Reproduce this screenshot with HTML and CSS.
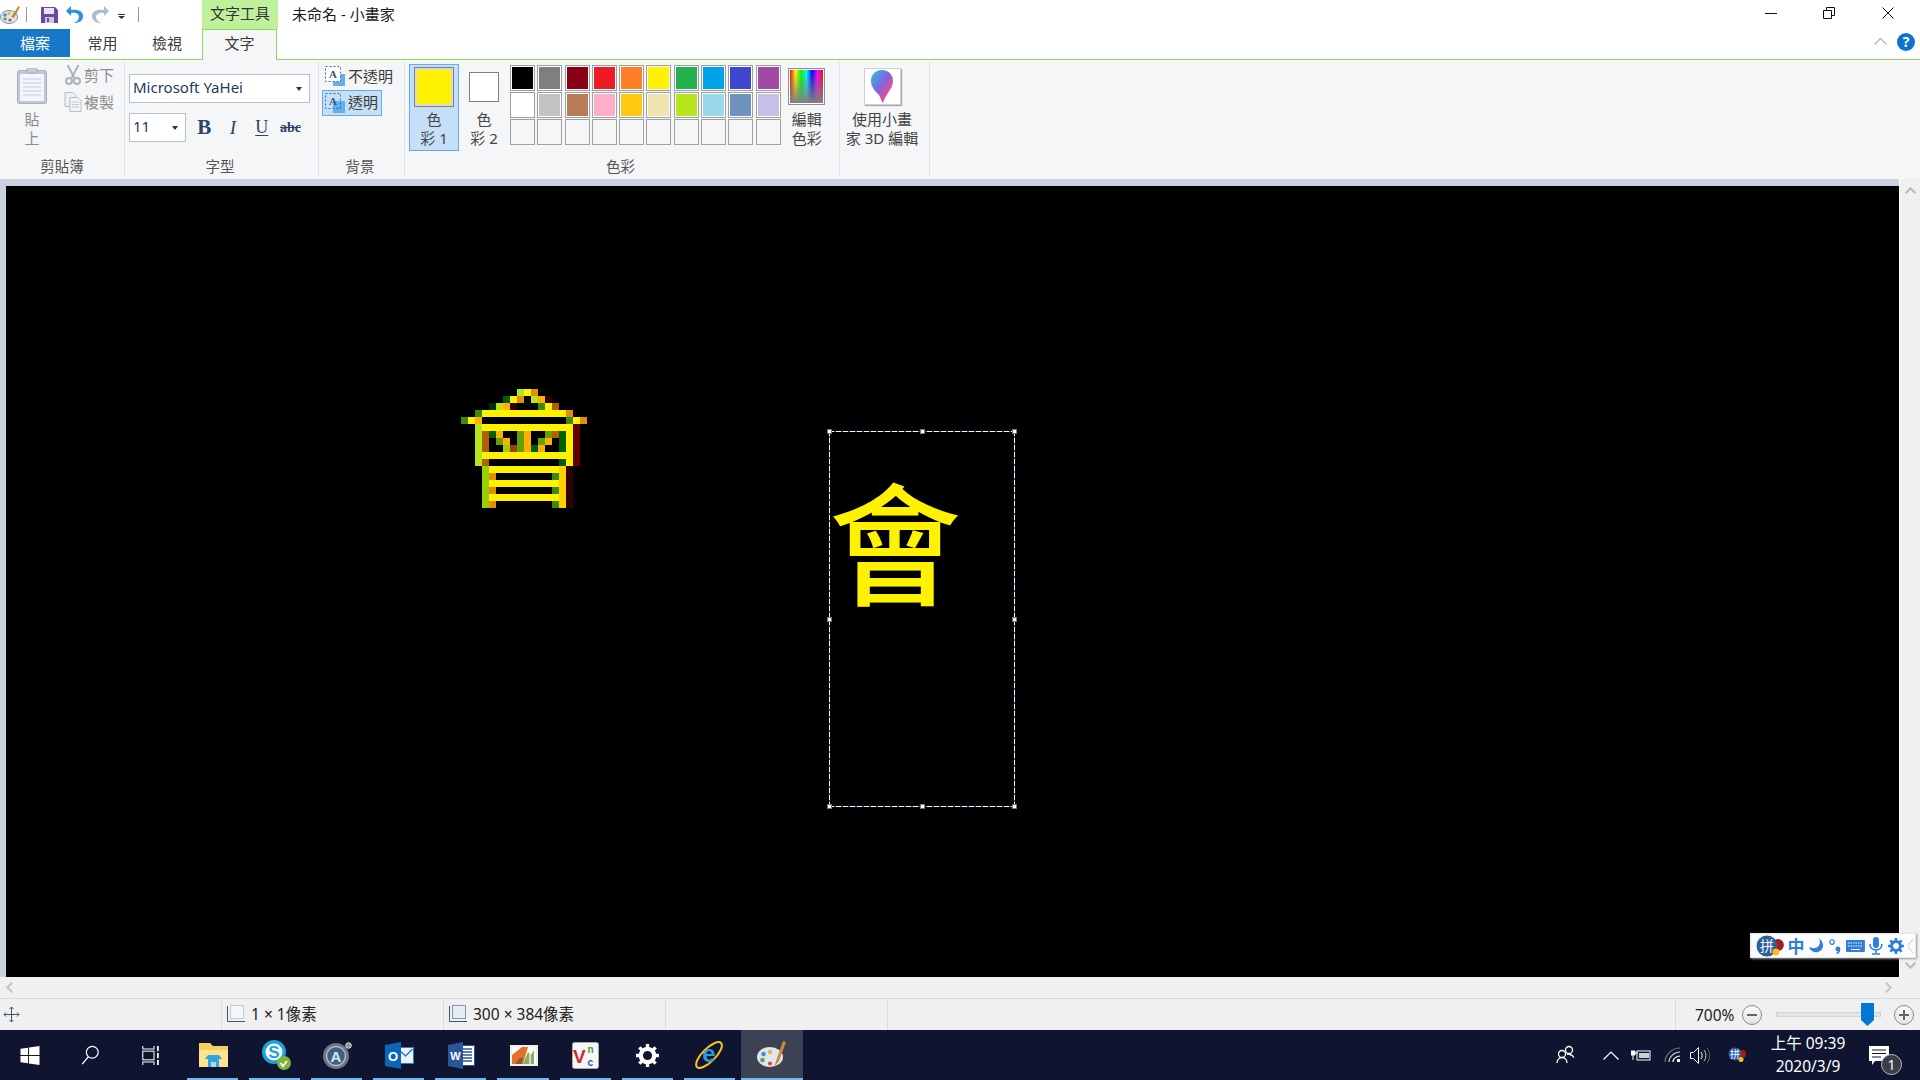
FILE: index.html
```html
<!DOCTYPE html>
<html lang="zh-Hant">
<head>
<meta charset="utf-8">
<title>未命名 - 小畫家</title>
<link rel="stylesheet" href="styles.css">
</head>
<body>
<div class="app">
  <header class="titlebar">
    <div class="qat">
      <svg class="qat-paint" width="21" height="21" viewBox="0 0 21 21"><ellipse cx="9" cy="13" rx="8.5" ry="6.5" fill="#dfe6ee" stroke="#7d8da3"/><circle cx="5" cy="11" r="1.7" fill="#3f8fd8"/><circle cx="9" cy="9.5" r="1.7" fill="#e9b93a"/><circle cx="5" cy="15" r="1.7" fill="#59a84b"/><circle cx="10" cy="16" r="1.6" fill="#d8483c"/><path d="M11 13 18.500 2l1.500 1-6 11z" fill="#c98a3b"/></svg>
      <span class="qat-sep"></span>
      <svg class="qat-save" width="17" height="16" viewBox="0 0 17 16"><path d="M0 0h14l3 3v13H0z" fill="#6a4aa3"/><rect x="3" y="1" width="10" height="6" fill="#e9e6f2"/><rect x="4" y="10" width="9" height="6" fill="#cfc8e0"/><rect x="6" y="11" width="2" height="4" fill="#6a4aa3"/></svg>
      <svg class="qat-undo" width="17" height="19" viewBox="0 0 17 19"><path d="M5 1 0 6l5 5V8c5-1 8 1 8 4 0 3-3 5-5 6 5 0 9-2 9-7 0-5-5-7-12-6z" fill="#2e8fdc"/></svg>
      <svg class="qat-redo" width="17" height="19" viewBox="0 0 17 19"><path d="M12 1l5 5-5 5V8C7 7 4 9 4 12c0 3 3 5 5 6-5 0-9-2-9-7 0-5 5-7 12-6z" fill="#a9bdd2"/></svg>
      <svg class="qat-drop" width="7" height="5" viewBox="0 0 7 5"><rect width="7" height="1" fill="#333"/><path d="M0 2h7L3.500 5z" fill="#333"/></svg>
      <span class="qat-sep qat-sep-end"></span>
    </div>
    <div class="context-title">文字工具</div>
    <div class="doc-title">未命名 - 小畫家</div>
    <div class="winctl">
      <span class="win-btn"><svg width="12" height="1" viewBox="0 0 12 1"><rect width="12" height="1" fill="#111"/></svg></span>
      <span class="win-btn"><svg width="12" height="12" viewBox="0 0 12 12"><path d="M.5 3.500h8v8h-8zM3.500 3.500v-3h8v8h-3" fill="none" stroke="#111"/></svg></span>
      <span class="win-btn"><svg width="12" height="12" viewBox="0 0 12 12"><path d="M.5.500l11 11M11.500.500l-11 11" fill="none" stroke="#111"/></svg></span>
    </div>
  </header>

  <nav class="tabs">
    <div class="tab tab-file">檔案</div>
    <div class="tab tab-home">常用</div>
    <div class="tab tab-view">檢視</div>
    <div class="tab tab-text">文字</div>
    <div class="tabs-right">
      <svg width="13" height="7" viewBox="0 0 13 7"><path d="M.5 6.500l6-6 6 6" fill="none" stroke="#b5b5b5" stroke-width="1.300"/></svg>
      <div class="help">?</div>
    </div>
  </nav>

  <section class="ribbon">
    <div class="group g-clip">
      <div class="group-body clip-body">
        <div class="paste">
          <svg width="30" height="36" viewBox="0 0 30 36"><rect x=".5" y="2.500" width="29" height="33" rx="2" fill="#bcc8d6" stroke="#a3b2c4"/><rect x="3" y="6" width="24" height="27" fill="#f3f5fa"/><path d="M6 11h18M6 15h18M6 19h18M6 23h18M6 27h18" stroke="#c4cbe0"/><rect x="10" y="0" width="10" height="5" rx="1.500" fill="#c5ced9" stroke="#a3b2c4"/></svg>
          <div class="stack-label muted">貼<br>上</div>
        </div>
        <div class="clip-actions">
          <div class="clip-row muted">
            <svg width="15" height="20" viewBox="0 0 15 20"><path d="M2 0l7 13M13 0L6 13" stroke="#aab4c2" stroke-width="2" fill="none"/><circle cx="3.500" cy="16" r="3" fill="none" stroke="#aab4c2" stroke-width="2"/><circle cx="11.500" cy="16" r="3" fill="none" stroke="#aab4c2" stroke-width="2"/></svg>
            <span>剪下</span>
          </div>
          <div class="clip-row muted">
            <svg width="17" height="20" viewBox="0 0 17 20"><path d="M.5.500h8l3 3v11H.5z" fill="#eef0f3" stroke="#b5bdc8"/><path d="M5.500 5.500h8l3 3v11h-11z" fill="#f3f4f7" stroke="#b5bdc8"/><path d="M7.500 10h7M7.500 12.500h7M7.500 15h7" stroke="#c3cad4"/></svg>
            <span>複製</span>
          </div>
        </div>
      </div>
      <div class="group-label">剪貼簿</div>
    </div>

    <div class="group g-font">
      <div class="group-body font-body">
        <div class="combo combo-font"><span>Microsoft YaHei</span><i class="caret"></i></div>
        <div class="font-row">
          <div class="combo combo-size"><span>11</span><i class="caret"></i></div>
          <div class="fmt fmt-b">B</div>
          <div class="fmt fmt-i">I</div>
          <div class="fmt fmt-u">U</div>
          <div class="fmt fmt-s">abc</div>
        </div>
      </div>
      <div class="group-label">字型</div>
    </div>

    <div class="group g-bg">
      <div class="group-body bg-body">
        <div class="bg-row">
          <svg width="20" height="20" viewBox="0 0 20 20"><rect x="8" y="8" width="12" height="12" fill="#63aef0"/><rect x=".5" y=".5" width="15" height="15" fill="#fff" stroke="#2f6fb5" stroke-dasharray="2 2"/><text x="8" y="12" class="ico-a">A</text></svg>
          <span>不透明</span>
        </div>
        <div class="bg-row bg-active">
          <svg width="20" height="20" viewBox="0 0 20 20"><rect x="8" y="8" width="12" height="12" fill="#63aef0"/><rect x=".5" y=".5" width="15" height="15" fill="none" stroke="#2f6fb5" stroke-dasharray="2 2"/><text x="8" y="12" class="ico-a">A</text></svg>
          <span>透明</span>
        </div>
      </div>
      <div class="group-label">背景</div>
    </div>

    <div class="group g-color">
      <div class="group-body color-body">
        <div class="color-btn color-active">
          <div class="swatch swatch-1"><i></i></div>
          <div class="stack-label">色<br>彩 1</div>
        </div>
        <div class="color-btn">
          <div class="swatch swatch-2"><i></i></div>
          <div class="stack-label">色<br>彩 2</div>
        </div>
        <div class="palette">
          <i class="cell c1"></i><i class="cell c2"></i><i class="cell c3"></i><i class="cell c4"></i><i class="cell c5"></i><i class="cell c6"></i><i class="cell c7"></i><i class="cell c8"></i><i class="cell c9"></i><i class="cell c10"></i>
          <i class="cell c11"></i><i class="cell c12"></i><i class="cell c13"></i><i class="cell c14"></i><i class="cell c15"></i><i class="cell c16"></i><i class="cell c17"></i><i class="cell c18"></i><i class="cell c19"></i><i class="cell c20"></i>
          <i class="cell"></i><i class="cell"></i><i class="cell"></i><i class="cell"></i><i class="cell"></i><i class="cell"></i><i class="cell"></i><i class="cell"></i><i class="cell"></i><i class="cell"></i>
        </div>
        <div class="edit-color">
          <div class="rainbow"><i></i></div>
          <div class="stack-label">編輯<br>色彩</div>
        </div>
      </div>
      <div class="group-label">色彩</div>
    </div>

    <div class="group g-3d">
      <div class="p3d">
        <div class="p3d-tile">
          <svg width="22" height="33" viewBox="0 0 22 33"><defs><linearGradient id="drop" x1="0" y1="0" x2="1" y2="1"><stop offset="0" stop-color="#27c8e8"/><stop offset=".45" stop-color="#7d66e0"/><stop offset=".75" stop-color="#ea4d8e"/><stop offset="1" stop-color="#f8a64a"/></linearGradient></defs><path d="M11 0c7 0 11 5 11 11 0 8-7 12-10 22-1-1-2-4-4-8C4 21 0 17 0 11 0 5 4 0 11 0z" fill="url(#drop)"/></svg>
        </div>
        <div class="stack-label">使用小畫<br>家 3D 編輯</div>
      </div>
    </div>
  </section>

  <main class="workspace">
    <div class="canvas">
      <svg class="pixel-art" width="126" height="119" viewBox="0 0 18 17" shape-rendering="crispEdges">
        <g fill="#fff200"><rect x="9" y="0" width="1" height="1"/><rect x="7" y="1" width="1" height="1"/><rect x="12" y="2" width="1" height="1"/><rect x="3" y="3" width="12" height="1"/><rect x="1" y="4" width="1" height="1"/><rect x="16" y="4" width="1" height="1"/><rect x="3" y="5" width="13" height="1"/><rect x="15" y="6" width="1" height="5"/><rect x="3" y="9" width="13" height="1"/><rect x="4" y="11" width="10" height="1"/><rect x="4" y="13" width="10" height="1"/><rect x="4" y="15" width="10" height="1"/></g>
        <g fill="#b5e61d"><rect x="8" y="0" width="1" height="1"/><rect x="10" y="1" width="1" height="1"/><rect x="5" y="2" width="1" height="1"/><rect x="2" y="5" width="1" height="6"/></g>
        <g fill="#99d000"><rect x="3" y="11" width="1" height="6"/><rect x="6" y="8" width="1" height="1"/></g>
        <g fill="#e09000"><rect x="10" y="0" width="1" height="1"/><rect x="8" y="1" width="1" height="1"/><rect x="15" y="3" width="1" height="1"/><rect x="17" y="4" width="1" height="1"/><rect x="4" y="12" width="1" height="1"/><rect x="4" y="14" width="1" height="1"/><rect x="4" y="16" width="1" height="1"/></g>
        <g fill="#ffb000"><rect x="11" y="1" width="1" height="1"/><rect x="6" y="2" width="1" height="1"/><rect x="2" y="4" width="1" height="1"/><rect x="5" y="6" width="1" height="1"/><rect x="6" y="7" width="1" height="1"/><rect x="12" y="7" width="1" height="1"/><rect x="11" y="8" width="1" height="1"/><rect x="9" y="6" width="1" height="3"/></g>
        <g fill="#ffd000"><rect x="14" y="11" width="1" height="6"/></g>
        <g fill="#006000"><rect x="6" y="1" width="1" height="1"/><rect x="14" y="6" width="1" height="3"/><rect x="14" y="10" width="1" height="1"/><rect x="4" y="6" width="1" height="1"/><rect x="10" y="8" width="1" height="1"/></g>
        <g fill="#003000"><rect x="4" y="2" width="1" height="1"/></g>
        <g fill="#3f8a00"><rect x="11" y="2" width="1" height="1"/><rect x="2" y="3" width="1" height="1"/><rect x="0" y="4" width="1" height="1"/><rect x="15" y="4" width="1" height="1"/><rect x="13" y="12" width="1" height="1"/><rect x="13" y="14" width="1" height="1"/><rect x="13" y="16" width="1" height="1"/></g>
        <g fill="#66a000"><rect x="8" y="6" width="1" height="3"/><rect x="12" y="6" width="1" height="1"/><rect x="5" y="7" width="1" height="1"/><rect x="11" y="7" width="1" height="1"/></g>
        <g fill="#b06000"><rect x="13" y="2" width="1" height="1"/><rect x="3" y="6" width="1" height="3"/><rect x="3" y="10" width="1" height="1"/><rect x="13" y="6" width="1" height="1"/></g>
        <g fill="#a04000"><rect x="7" y="8" width="1" height="1"/></g>
        <g fill="#600000"><rect x="16" y="5" width="1" height="6"/></g>
        <g fill="#300000"><rect x="12" y="1" width="1" height="1"/><rect x="7" y="2" width="1" height="1"/><rect x="15" y="11" width="1" height="6"/></g>
      </svg>
      <div class="textbox">
        <span class="textbox-glyph">會</span>
        <i class="h h-tl"></i><i class="h h-tc"></i><i class="h h-tr"></i><i class="h h-ml"></i><i class="h h-mr"></i><i class="h h-bl"></i><i class="h h-bc"></i><i class="h h-br"></i>
      </div>
    </div>
    <div class="vscroll">
      <svg width="11" height="7" viewBox="0 0 11 7"><path d="M.7 6.300l4.800-5 4.800 5" fill="none" stroke="#b9b9b9" stroke-width="2"/></svg>
      <svg width="11" height="7" viewBox="0 0 11 7"><path d="M.7.700l4.800 5 4.800-5" fill="none" stroke="#b9b9b9" stroke-width="2"/></svg>
    </div>
  </main>

  <div class="hscroll">
    <svg width="7" height="11" viewBox="0 0 7 11"><path d="M6.300.7l-5 4.800 5 4.800" fill="none" stroke="#c4c4c4" stroke-width="2"/></svg>
    <svg width="7" height="11" viewBox="0 0 7 11"><path d="M.7.7l5 4.800-5 4.800" fill="none" stroke="#c4c4c4" stroke-width="2"/></svg>
  </div>

  <footer class="status">
    <div class="st st-move"><svg width="17" height="17" viewBox="0 0 17 17"><path d="M8.500 1v15M1 8.500h15M6.500 3l2-2 2 2M6.500 14l2 2 2-2M3 6.500l-2 2 2 2M14 6.500l2 2-2 2" fill="none" stroke="#3d5670"/></svg></div>
    <div class="st st-cell"><svg width="19" height="18" viewBox="0 0 19 18"><rect x="3.500" y=".5" width="13" height="13" fill="#f6f6f6" stroke="#9aa3ad" stroke-dasharray="1 1"/><path d="M.5 1v15.500H18" fill="none" stroke="#3d5670"/></svg><span>1 × 1像素</span></div>
    <div class="st st-cell"><svg width="19" height="18" viewBox="0 0 19 18"><rect x="3.500" y=".5" width="13" height="13" fill="#e4edf5" stroke="#8797a8"/><path d="M.5 1v15.500H18" fill="none" stroke="#3d5670"/></svg><span>300 × 384像素</span></div>
    <div class="st st-empty"></div>
    <div class="st st-fill"></div>
    <div class="st st-zoom">
      <span class="zoom-val">700%</span>
      <span class="zoom-btn"><i class="zoom-minus"></i></span>
      <div class="zoom-track"><svg class="zoom-thumb" width="13" height="23" viewBox="0 0 13 23"><path d="M0 0h13v17l-6.500 6L0 17z" fill="#0078d7"/></svg></div>
      <span class="zoom-btn zoom-plus"><i class="zoom-minus"></i><i class="zoom-vert"></i></span>
    </div>
  </footer>

  <footer class="taskbar">
    <div class="tb-sys">
      <svg width="20" height="19" viewBox="0 0 20 20"><path d="M0 3l8-1.200v7.700H0zM9 1.700L20 0v9.500H9zM0 10.500h8v7.700L0 17zM9 10.500h11V20L9 18.300z" fill="#fff"/></svg>
    </div>
    <div class="tb-sys">
      <svg width="20" height="20" viewBox="0 0 20 22"><circle cx="12.500" cy="8" r="6.500" fill="none" stroke="#fff" stroke-width="1.300"/><path d="M8 13 1.500 21" stroke="#fff" stroke-width="1.500"/></svg>
    </div>
    <div class="tb-sys">
      <svg width="20" height="19" viewBox="0 0 20 22"><path d="M.5 0v3.500h13V0M.5 22v-3.500h13V22" fill="none" stroke="#fff" stroke-width="1.200"/><rect x=".5" y="6" width="13" height="10" fill="none" stroke="#fff" stroke-width="1.200"/><rect x="17" y="0" width="2" height="6" fill="#fff"/><rect x="17" y="8" width="2" height="6" fill="#fff"/><rect x="17" y="16" width="2" height="6" fill="#fff"/></svg>
    </div>
    <div class="tb-app tb-on">
      <svg width="29" height="24" viewBox="0 0 29 24"><path d="M0 0h11l3 3h15v21H0z" fill="#f6cf5c"/><path d="M0 7h29v17H0z" fill="#fbe48e"/><path d="M9 12h11l3 4h-3v8H9v-8H6z" fill="#35a4dd"/><rect x="12" y="19" width="5" height="5" fill="#a6dcf3"/></svg>
    </div>
    <div class="tb-app tb-on">
      <svg class="skype" width="30" height="30" viewBox="0 0 30 30"><circle cx="12" cy="12" r="12" fill="#19a3e0"/><circle cx="12" cy="12" r="8.500" fill="#fff"/><text x="12" y="18" class="ico-skype">S</text><circle cx="22" cy="23" r="7" fill="#7ab638"/><path d="M18.500 23l2.500 3 4-5" fill="none" stroke="#fff" stroke-width="1.800"/></svg>
    </div>
    <div class="tb-app tb-on">
      <svg width="29" height="27" viewBox="0 0 29 27"><circle cx="13" cy="14" r="13" fill="#6e7680"/><circle cx="13" cy="14" r="9.500" fill="#3c6085" stroke="#b0b8c0" stroke-width="1.500"/><text x="13" y="20" class="ico-a2">A</text><circle cx="25.500" cy="3.500" r="2.800" fill="#8d939a" stroke="#ddd"/></svg>
    </div>
    <div class="tb-app tb-on">
      <svg width="29" height="27" viewBox="0 0 29 27"><rect x="11.500" y="5.500" width="17" height="16" fill="#e9f2fb" stroke="#2e7cc8"/><path d="M13 7l7.500 7 7-7" fill="none" stroke="#2e7cc8" stroke-width="1.500"/><path d="M0 3 16 0v27L0 24z" fill="#0a66b8"/><text x="8" y="18.500" class="ico-o">O</text></svg>
    </div>
    <div class="tb-app tb-on">
      <svg width="27" height="27" viewBox="0 0 27 27"><rect x="10.500" y="3.500" width="16" height="20" fill="#fff" stroke="#2b579a"/><path d="M14 7h10M14 10h10M14 13h10M14 16h10M14 19h10" stroke="#2b579a" stroke-width="1.400"/><path d="M0 3 15 0v27L0 24z" fill="#2b579a"/><text x="7.500" y="18" class="ico-w">W</text></svg>
    </div>
    <div class="tb-app tb-on">
      <svg width="28" height="21" viewBox="0 0 28 21"><rect width="28" height="21" fill="#f4efe4"/><rect x="2" y="2" width="24" height="17" fill="#fff"/><path d="M2 19V10L12 2h6l-5 17z" fill="#e0722a"/><path d="M13 19l5-12 3 3 3-5v14z" fill="#8cae5a"/><path d="M6 19c1-5 4-7 7-6l-1 6z" fill="#8a5a3a"/><rect x="19" y="9" width="2" height="10" fill="#d8d8d8"/></svg>
    </div>
    <div class="tb-app tb-on">
      <svg width="27" height="27" viewBox="0 0 27 27"><rect x=".5" y=".5" width="26" height="26" rx="2" fill="#f7f7f7" stroke="#aaa"/><text x="1" y="21" class="ico-v">V</text><text x="15.500" y="11" class="ico-n">n</text><text x="15.500" y="24" class="ico-c">c</text></svg>
    </div>
    <div class="tb-app tb-on">
      <svg width="23" height="23" viewBox="0 0 24 24"><circle cx="12" cy="12" r="7" fill="none" stroke="#fff" stroke-width="4.500"/><path d="M12 0v5M12 19v5M0 12h5M19 12h5M3.500 3.500l3.500 3.500M17 17l3.500 3.500M20.500 3.500 17 7M7 17l-3.500 3.500" stroke="#fff" stroke-width="3.500"/></svg>
    </div>
    <div class="tb-app tb-on">
      <svg width="29" height="28" viewBox="0 0 29 28"><ellipse cx="14" cy="14" rx="17" ry="6.500" transform="rotate(-45 14 14)" fill="none" stroke="#f6c21c" stroke-width="2"/><text x="14" y="21" class="ico-e">e</text></svg>
    </div>
    <div class="tb-app tb-paint">
      <svg width="30" height="28" viewBox="0 0 30 28"><ellipse cx="13" cy="16" rx="13" ry="10" fill="#dfe6ee"/><circle cx="6.500" cy="13" r="2.300" fill="#3f8fd8"/><circle cx="13" cy="11" r="2.300" fill="#e9b93a"/><circle cx="5.500" cy="19" r="2.300" fill="#59a84b"/><circle cx="13" cy="22.500" r="2.100" fill="#d8483c"/><path d="M17 26 26 0l3 1-7 19z" fill="#c98a3b"/></svg>
    </div>
    <div class="tray">
      <div class="tr tr-people"><svg width="20" height="20" viewBox="0 0 20 20"><circle cx="13" cy="5" r="3.500" fill="none" stroke="#fff" stroke-width="1.300"/><circle cx="6" cy="9" r="3.500" fill="none" stroke="#fff" stroke-width="1.300"/><path d="M1 18c0-3 2-5.500 5-5.500s5 2.500 5 5.500M11 9.500c1-.5 5-.5 7 3" fill="none" stroke="#fff" stroke-width="1.300"/></svg></div>
      <div class="tr tr-chev"><svg width="16" height="9" viewBox="0 0 16 9"><path d="M.5 8.500 8 1l7.500 7.500" fill="none" stroke="#fff" stroke-width="1.200"/></svg></div>
      <div class="tr tr-power"><svg width="20" height="14" viewBox="0 0 20 14"><rect x="6" y="3" width="13" height="9" fill="none" stroke="#fff"/><rect x="8" y="5" width="10" height="5" fill="#cfcfcf"/><path d="M0 3h4v4H0zM4 5h3M2 7v5" stroke="#fff" fill="#fff"/></svg></div>
      <div class="tr tr-wifi"><svg width="17" height="16" viewBox="0 0 17 16"><path d="M1 15C1 8 8 1 16 1" fill="none" stroke="#777" stroke-width="1.200"/><path d="M5 15c0-5 5-10 11-10" fill="none" stroke="#ccc" stroke-width="1.200"/><path d="M9 15c0-3 3-6 7-6" fill="none" stroke="#fff" stroke-width="1.200"/><rect x="13" y="12" width="3" height="3" fill="#fff"/></svg></div>
      <div class="tr tr-vol"><svg width="20" height="17" viewBox="0 0 20 17"><path d="M.5 5.500h3l5-5v16l-5-5h-3z" fill="none" stroke="#fff"/><path d="M11 5c1.500 2 1.500 5 0 7" fill="none" stroke="#fff"/><path d="M14 3c2.500 3 2.500 8 0 11" fill="none" stroke="#ccc"/><path d="M17 1c3.500 4.500 3.500 10.500 0 15" fill="none" stroke="#666"/></svg></div>
      <div class="tr tr-ime"><svg width="18" height="16" viewBox="0 0 18 16"><circle cx="14" cy="7" r="4" fill="#b01818"/><circle cx="7" cy="7" r="6.500" fill="#2a5fa0"/><text x="7" y="11" class="ico-ime">拼</text><circle cx="13" cy="12.500" r="2.500" fill="#f4c21a"/></svg></div>
      <div class="tr tr-clock">上午 09:39<br>2020/3/9</div>
      <div class="tr tr-action">
        <svg width="20" height="19" viewBox="0 0 20 19"><path d="M0 0h20v15H6l-3 4v-4H0z" fill="#fff"/><path d="M3 4h14M3 7.500h14M3 11h9" stroke="#0f1430"/></svg>
        <span class="badge">1</span>
      </div>
    </div>
  </footer>

  <aside class="ime">
    <svg width="28" height="22" viewBox="0 0 28 22"><circle cx="22" cy="10" r="6" fill="#b01818"/><circle cx="11" cy="11" r="10.500" fill="#2a5fa0"/><text x="11" y="16" class="ico-ime-l">拼</text><circle cx="20" cy="17" r="3.500" fill="#f4c21a"/></svg>
    <span class="ime-zh">中</span>
    <svg width="16" height="15" viewBox="0 0 16 15"><path d="M10 0c2 4 1 9-4 10-2 .5-4 0-6-1 1 4 5 6 9 5 5-1 8-8 1-14z" fill="#2f7de1"/></svg>
    <svg width="12" height="16" viewBox="0 0 12 16"><circle cx="3" cy="4" r="2.300" fill="none" stroke="#2f7de1" stroke-width="1.200"/><circle cx="9" cy="11" r="2.500" fill="#2f7de1"/><path d="M10.500 12c0 2-1.500 3-3 3.500" stroke="#2f7de1" stroke-width="1.500" fill="none"/></svg>
    <svg width="19" height="12" viewBox="0 0 19 12"><rect width="19" height="12" rx="1" fill="#2f7de1"/><path d="M2 3h15M2 6h15" stroke="#fff" stroke-dasharray="1.500 1"/><path d="M5 9.500h9" stroke="#fff"/></svg>
    <svg width="14" height="18" viewBox="0 0 14 18"><rect x="4" y="0" width="6" height="11" rx="3" fill="#2f7de1"/><path d="M1 7c0 4 3 6 6 6s6-2 6-6M7 13v3M3 17h8" fill="none" stroke="#2f7de1" stroke-width="1.600"/></svg>
    <svg width="16" height="16" viewBox="0 0 16 16"><circle cx="8" cy="8" r="4.500" fill="none" stroke="#2f7de1" stroke-width="3"/><path d="M8 0v3M8 13v3M0 8h3M13 8h3M2.300 2.300l2.200 2.200M11.500 11.500l2.200 2.200M13.700 2.300l-2.200 2.200M4.500 11.500l-2.200 2.200" stroke="#2f7de1" stroke-width="2.500"/></svg>
    <svg class="ime-arrow" width="6" height="16" viewBox="0 0 6 16"><path d="M5.500.5-.5 8l6 7.500" fill="none" stroke="#c8c8c8"/></svg>
  </aside>
</div>
</body>
</html>
```

FILE: styles.css
```css
* { box-sizing: border-box; }
html, body { margin: 0; padding: 0; }
body {
  width: 1920px;
  height: 1080px;
  overflow: hidden;
  font-family: "Noto Sans", "Noto Sans CJK TC", sans-serif;
  font-size: 15px;
  color: #3a3a3a;
  background: #fff;
}
i { display: block; font-style: normal; }
.app { position: relative; width: 1920px; height: 1080px; display: flex; flex-direction: column; }

/* title bar */
.titlebar { height: 29px; display: flex; background: #fff; flex: none; }
.qat { width: 202px; display: flex; align-items: center; position: relative; }
.qat-sep { width: 1px; height: 15px; background: #9a9a9a; margin-left: 5px; }
.qat-save { margin-left: 14px; }
.qat-undo { margin-left: 8px; }
.qat-redo { margin-left: 9px; }
.qat-drop { margin-left: 9px; margin-top: 3px; }
.qat-sep-end { margin-left: 13px; }
.context-title { width: 76px; background: #c0f09c; color: #333; text-align: center; line-height: 27px; }
.doc-title { margin-left: 14px; line-height: 29px; color: #1a1a1a; }
.winctl { margin-left: auto; display: flex; padding-right: 3px; }
.win-btn { width: 58.500px; display: flex; align-items: center; justify-content: center; padding-bottom: 3px; }

/* tabs */
.tabs { height: 31px; display: flex; flex: none; border-bottom: 1px solid #8cdc5a; background: #fff; position: relative; }
.tab { text-align: center; line-height: 28px; }
.tab-file { width: 70px; height: 28px; background: #1878c8; color: #fff; }
.tab-home { width: 65px; }
.tab-view { width: 64px; }
.tab-text { width: 75px; height: 31px; margin-left: 3px; background: #f5f6f7; border: 1px solid #8cdc5a; border-bottom: 0; line-height: 26px; }
.tabs-right { margin-left: auto; display: flex; align-items: center; gap: 10px; padding: 0 5px 5px 0; }
.help { width: 18px; height: 18px; border-radius: 50%; background: #0a74d0; color: #fff; font-weight: 700; font-size: 14px; line-height: 18px; text-align: center; }

/* ribbon */
.ribbon { height: 119px; flex: none; display: flex; background: #f5f6f7; padding: 2px 0 3px; }
.group { display: flex; flex-direction: column; border-right: 1px solid #e0e2e5; flex: none; }
.group-body { flex: 1; display: flex; min-height: 0; }
.group-label { height: 25px; line-height: 31px; text-align: center; color: #555; font-size: 14.500px; flex: none; }
.g-font .group-label, .g-bg .group-label, .g-color .group-label { padding-right: 3px; }
.stack-label { text-align: center; line-height: 19px; font-size: 15px; color: #444; }
.muted, .muted .stack-label { color: #8d8d8d; }

.g-clip { width: 125px; }
.clip-body { padding-left: 17px; }
.paste { width: 30px; padding-top: 6px; }
.paste svg { display: block; }
.paste .stack-label { margin-top: 6px; }
.clip-actions { margin: -1px 0 0 15px; }
.clip-row { height: 27px; display: flex; align-items: center; }
.clip-row svg { width: 22px; flex: none; }

.g-font { width: 194px; }
.font-body { flex-direction: column; padding: 12px 0 0 4px; }
.combo { height: 29px; background: #fff; border: 1px solid #b4bfd0; display: flex; align-items: center; padding: 0 7px 4px 3px; }
.combo-font { width: 181px; color: #1e3a5f; }
.combo-size { width: 57px; color: #1e3a5f; }
.caret { margin: 4px 0 0 auto; width: 0; height: 0; border: 3.500px solid transparent; border-top: 4px solid #333; border-bottom: 0; }
.font-row { display: flex; align-items: center; margin-top: 10px; }
.fmt { width: 28.700px; text-align: center; font-family: "Liberation Serif", serif; color: #2a4468; font-size: 18px; line-height: 29px; }
.fmt-b { margin-left: 4px; font-weight: 700; font-size: 21px; }
.fmt-i { font-style: italic; font-size: 19px; }
.fmt-u { text-decoration: underline; text-underline-offset: 2px; }
.fmt-s { text-decoration: line-through; font-size: 14px; font-weight: 700; }

.g-bg { width: 86px; }
.bg-body { flex-direction: column; padding: 1px 0 0 3px; gap: 1px; }
.bg-row { width: 60px; height: 26px; display: flex; align-items: center; gap: 3px; padding: 0 0 2px 2px; white-space: nowrap; border: 1px solid transparent; }
.bg-row svg { flex: none; margin-top: 2px; }
.bg-active { background: #c5dff7; border-color: #6aa9e9; padding-bottom: 4px; }
.bg-active svg { margin-top: 4px; }
.ico-a { font-family: "Liberation Serif", serif; font-weight: 700; font-size: 11px; fill: #33577f; text-anchor: middle; }

.g-color { width: 435px; }
.color-body { padding: 2px 0 0 4px; }
.color-btn { width: 50px; height: 87px; border: 1px solid transparent; flex: none; display: flex; flex-direction: column; align-items: center; }
.color-active { background: #c5dff7; border-color: #6aa9e9; }
.swatch { border: 1px solid #808080; background: #fff; flex: none; }
.swatch i { width: 100%; height: 100%; }
.swatch-1 { width: 40px; height: 40px; margin-top: 2px; padding: 2px; background: #d9d9d9; }
.swatch-1 i { background: #fff200; }
.swatch-2 { width: 30px; height: 30px; margin-top: 7px; padding: 2px; margin-bottom: 5px; }
.swatch-2 i { background: #fff; }
.color-btn .stack-label { margin-top: 3px; }
.palette { display: grid; grid-template-columns: repeat(10, 25px); grid-auto-rows: 26px; column-gap: 2.300px; row-gap: 1px; margin: 1px 0 0 1px; flex: none; align-self: flex-start; }
.cell { border: 1px solid #a0a0a0; background: #f5f6f7; }
.cell[class*=" c"] { box-shadow: inset 0 0 0 1px #fff; }
.c1 { background: #000; } .c2 { background: #7f7f7f; } .c3 { background: #880015; } .c4 { background: #ed1c24; } .c5 { background: #ff7f27; }
.c6 { background: #fff200; } .c7 { background: #22b14c; } .c8 { background: #00a2e8; } .c9 { background: #3f48cc; } .c10 { background: #a349a4; }
.c11 { background: #fff; } .c12 { background: #c3c3c3; } .c13 { background: #b97a57; } .c14 { background: #ffaec9; } .c15 { background: #ffc90e; }
.c16 { background: #efe4b0; } .c17 { background: #b5e61d; } .c18 { background: #99d9ea; } .c19 { background: #7092be; } .c20 { background: #c8bfe7; }
.edit-color { width: 46px; margin-left: 3px; display: flex; flex-direction: column; align-items: center; flex: none; }
.rainbow { width: 37px; height: 37px; margin-top: 4px; border: 1px solid #909090; padding: 1px; background: #fff; }
.rainbow i { width: 100%; height: 100%; background: linear-gradient(to bottom, transparent, #808080), linear-gradient(to right, #f00, #ff0, #0f0, #0ff, #00f, #f0f, #f00); }
.edit-color .stack-label { margin-top: 5px; }

.g-3d { width: 90px; }
.p3d { display: flex; flex-direction: column; align-items: center; width: 84px; }
.p3d-tile { width: 37px; height: 37px; margin-top: 6px; background: #fff; border: 1px solid #cfcfcf; box-shadow: 1px 1px 1px #aaa; display: flex; align-items: center; justify-content: center; }
.p3d .stack-label { margin-top: 5px; white-space: nowrap; }

/* workspace */
.workspace { flex: 1; display: flex; background: #c9d1e1; min-height: 0; }
.canvas { flex: 1; margin: 7px 0 0 6px; background: #000; position: relative; overflow: hidden; }
.vscroll { width: 21px; background: #f0f0f0; display: flex; flex-direction: column; justify-content: space-between; align-items: center; padding: 8px 0; border-left: 1px solid #fff; }
.pixel-art { position: absolute; left: 455px; top: 203px; }
.textbox {
  position: absolute; left: 823px; top: 245px; width: 186px; height: 376px;
  background-image:
    repeating-linear-gradient(90deg, #fff 0 5px, #0a64b4 5px 7px),
    repeating-linear-gradient(90deg, #fff 0 5px, #0a64b4 5px 7px),
    repeating-linear-gradient(0deg, #fff 0 5px, #0a64b4 5px 7px),
    repeating-linear-gradient(0deg, #fff 0 5px, #0a64b4 5px 7px);
  background-size: 100% 1px, 100% 1px, 1px 100%, 1px 100%;
  background-position: 0 0, 0 100%, 0 0, 100% 0;
  background-repeat: no-repeat;
}
.textbox-glyph { position: absolute; left: 0; top: 27px; font-family: "Noto Sans CJK TC", sans-serif; font-size: 132px; line-height: 160px; font-weight: 500; color: #fff200; }
.h { position: absolute; width: 5px; height: 5px; background: #fff; border: 1px solid #777; }
.h-tl { left: -2px; top: -2px; } .h-tc { left: 91px; top: -2px; } .h-tr { right: -2px; top: -2px; }
.h-ml { left: -2px; top: 186px; } .h-mr { right: -2px; top: 186px; }
.h-bl { left: -2px; bottom: -2px; } .h-bc { left: 91px; bottom: -2px; } .h-br { right: -2px; bottom: -2px; }

.hscroll { height: 22px; flex: none; background: #f0f0f0; border-bottom: 1px solid #d9d9d9; display: flex; justify-content: space-between; align-items: center; padding: 0 28px 0 6px; }

/* status */
.status { height: 31px; flex: none; background: #f0f0f0; display: flex; font-size: 15.500px; color: #222; }
.st { display: flex; align-items: center; border-right: 1px solid #dcdcdc; flex: none; }
.st-move { width: 222px; padding-left: 3px; }
.st-cell { width: 222px; padding: 0 0 2px 5px; gap: 5px; }
.st-empty { width: 222px; }
.st-fill { flex: 1; }
.st-zoom { width: 244px; border-right: 0; padding-left: 19px; }
.zoom-val { width: 51px; font-size: 15.500px; white-space: nowrap; }
.zoom-btn { width: 20px; height: 20px; border: 1px solid #8a8a8a; border-radius: 50%; background: linear-gradient(#fafafa, #e4e4e4); position: relative; flex: none; margin-left: -4px; }
.zoom-minus { position: absolute; left: 4px; right: 4px; top: 8px; height: 2px; background: #666; }
.zoom-vert { position: absolute; top: 4px; bottom: 4px; left: 8px; width: 2px; background: #666; }
.zoom-track { width: 105px; height: 5px; background: #e2e4e6; border: 1px solid #d0d2d4; margin-left: 14px; position: relative; flex: none; }
.zoom-thumb { position: absolute; left: 84px; top: -10px; }
.zoom-plus { margin-left: 13px; }

/* taskbar */
.taskbar { height: 50px; flex: none; background: #0f1430; display: flex; position: relative; }
.tb-sys { width: 60px; display: flex; align-items: center; justify-content: center; flex: none; }
.tb-sys:nth-child(2) { width: 59px; }
.tb-sys:nth-child(3) { width: 63px; }
.tb-app { width: 62.100px; display: flex; align-items: center; justify-content: center; position: relative; flex: none; }
.skype { margin-left: 4px; }
.tb-on::after { content: ""; position: absolute; left: 5px; right: 6px; bottom: 0; height: 2px; background: #76b9ed; }
.tb-paint { background: #3d4154; }
.tb-paint::after { content: ""; position: absolute; left: 0; right: 0; bottom: 0; height: 2px; background: #76b9ed; }
.tray { margin-left: auto; display: flex; width: 384px; color: #fff; flex: none; }
.tr { display: flex; align-items: center; justify-content: center; flex: none; position: relative; }
.tr-people { width: 60px; } .tr-chev { width: 30px; } .tr-power { width: 30px; } .tr-wifi { width: 32px; }
.tr-vol { width: 24px; } .tr-ime { width: 50px; }
.tr-clock { width: 92px; text-align: center; font-size: 15.500px; line-height: 23px; }
.tr-action { width: 50px; }
.badge { position: absolute; left: 27px; top: 24px; width: 21px; height: 21px; border-radius: 50%; background: #3a3d4a; border: 1px solid #bbb; color: #fff; text-align: center; font-size: 14px; line-height: 19px; }

.ico-skype { font-family: "Liberation Sans", sans-serif; font-weight: 700; font-size: 17px; fill: #19a3e0; text-anchor: middle; }
.ico-a2 { font-family: "Liberation Sans", sans-serif; font-weight: 700; font-size: 15px; fill: #dfe6ee; text-anchor: middle; }
.ico-o { font-family: "Liberation Sans", sans-serif; font-weight: 700; font-size: 13px; fill: #fff; text-anchor: middle; }
.ico-w { font-family: "Liberation Sans", sans-serif; font-weight: 700; font-size: 11px; fill: #fff; text-anchor: middle; }
.ico-v { font-family: "Liberation Sans", sans-serif; font-weight: 700; font-size: 19px; fill: #d8232a; }
.ico-n { font-family: "Liberation Sans", sans-serif; font-weight: 700; font-size: 10px; fill: #3a9a3a; }
.ico-c { font-family: "Liberation Sans", sans-serif; font-weight: 700; font-size: 10px; fill: #2a52be; }
.ico-e { font-family: "Liberation Sans", sans-serif; font-weight: 700; font-size: 24px; fill: #2d9bd8; text-anchor: middle; }
.ico-ime { font-family: "Noto Sans CJK TC", sans-serif; font-size: 10px; fill: #fff; text-anchor: middle; }
.ico-ime-l { font-family: "Noto Sans CJK TC", sans-serif; font-size: 14px; fill: #fff; text-anchor: middle; }

/* floating IME bar */
.ime { position: absolute; left: 1750px; top: 933px; width: 166px; height: 25px; background: #fbfcfd; border: 1px solid #e6e6e6; box-shadow: 1px 1px 2px #999; display: flex; align-items: center; gap: 4.500px; padding-left: 5px; }
.ime-zh { color: #2f7de1; font-weight: 700; font-size: 17px; line-height: 20px; font-family: "Noto Sans CJK TC", sans-serif; margin-left: -1px; }
.ime-arrow { margin-left: auto; margin-right: 1px; }
```
